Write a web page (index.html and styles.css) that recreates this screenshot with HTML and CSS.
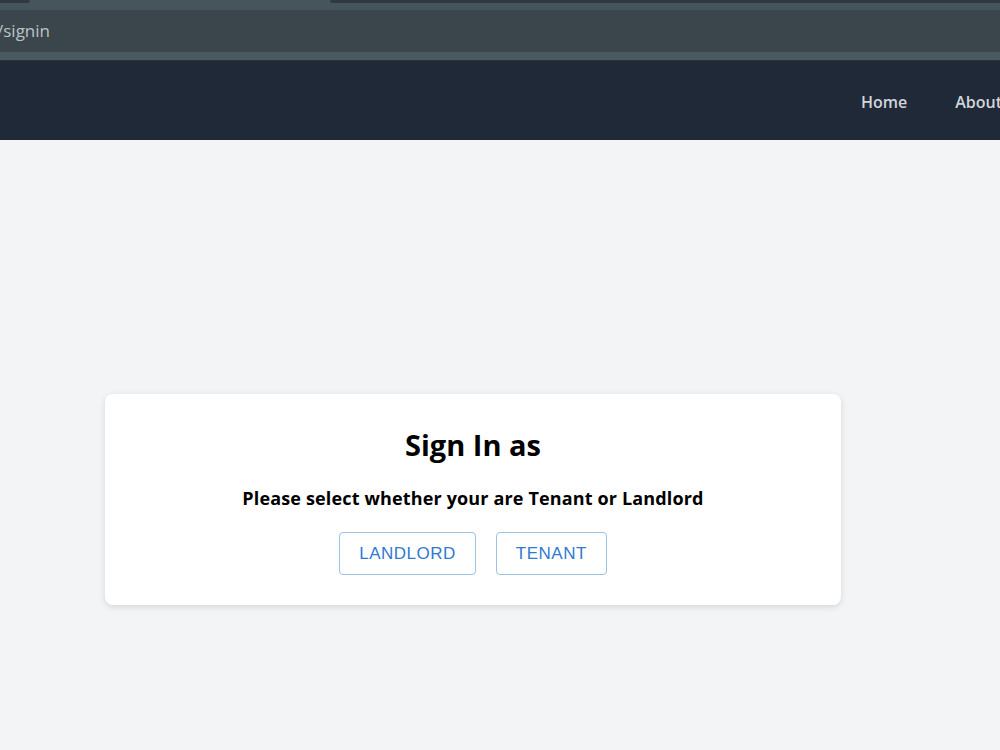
FILE: index.html
```html
<!DOCTYPE html>
<html lang="en">
<head>
    <meta charset="UTF-8">
    <meta name="viewport" content="width=device-width, initial-scale=1.0">
    <title>Sign In</title>
    <link rel="stylesheet" href="styles.css">
</head>
<body>
    <div id="browser-bar">
        <div class="tab-strip">
            <span class="tab tab-left"></span>
            <span class="tab tab-right"></span>
        </div>
        <div class="address">/signin</div>
        <div class="address-edge"></div>
    </div>
    <div id="navbar">
        <a href="#" class="nav-link">Home</a>
        <a href="#" class="nav-link">About</a>
    </div>
    <div id="main">
        <div class="signin-card">
            <h1>Sign In as</h1>
            <p>Please select whether your are Tenant or Landlord</p>
            <div class="choice">
                <button class="choice-btn">LANDLORD</button>
                <button class="choice-btn">TENANT</button>
            </div>
        </div>
    </div>
</body>
</html>
```

FILE: styles.css
```css
html, body {
    margin: 0;
    height: 100%;
    overflow: hidden;
}
body {
    background-color: #f3f4f6;
    font-family: "Open Sans", "Noto Sans", sans-serif;
    color: #000;
}
#browser-bar {
    background-color: #46545c;
}
.tab-strip {
    height: 10px;
    display: flex;
    justify-content: space-between;
}
.tab {
    display: block;
    height: 3px;
    background-color: #2e3a40;
}
.tab-left {
    width: 30px;
    border-radius: 0 0 6px 0;
}
.tab-right {
    width: 670px;
    border-radius: 0 0 0 6px;
}
.address {
    height: 42px;
    line-height: 42px;
    background-color: #3b464c;
    color: #b9c3c7;
    font-size: 17px;
    margin-left: -3px;
}
.address-edge {
    height: 8px;
    background-color: #4b5a61;
    border-bottom: 1px solid #2a343a;
}
#navbar {
    height: 79px;
    background-color: #1f2937;
    display: flex;
    align-items: center;
    justify-content: flex-end;
    gap: 48px;
    margin-right: -2px;
    padding-top: 2px;
    box-sizing: border-box;
}
.nav-link {
    color: #d1d5db;
    text-decoration: none;
    font-size: 16px;
    font-weight: 600;
}
#main {
    padding-top: 254px;
    padding-left: 105px;
}
.signin-card {
    width: 736px;
    box-sizing: border-box;
    background-color: #fff;
    border-radius: 8px;
    box-shadow: 0 2px 6px rgba(0, 0, 0, 0.12);
    padding: 30px 20px 30px;
    text-align: center;
}
.signin-card h1 {
    margin: 0;
    font-size: 29px;
    font-weight: 700;
    line-height: 42px;
}
.signin-card p {
    margin: 19px 0 21px;
    font-size: 18px;
    letter-spacing: 0.15px;
    font-weight: 700;
    line-height: 26px;
}
.choice {
    display: flex;
    justify-content: center;
    gap: 20px;
}
.choice-btn {
    font-family: "Liberation Sans", Arial, sans-serif;
    font-size: 17px;
    letter-spacing: 0.5px;
    color: #2f7ad1;
    background-color: #fff;
    border: 1px solid #9cc2e6;
    border-radius: 4px;
    height: 43px;
    padding: 0 19px;
    cursor: pointer;
}
```
